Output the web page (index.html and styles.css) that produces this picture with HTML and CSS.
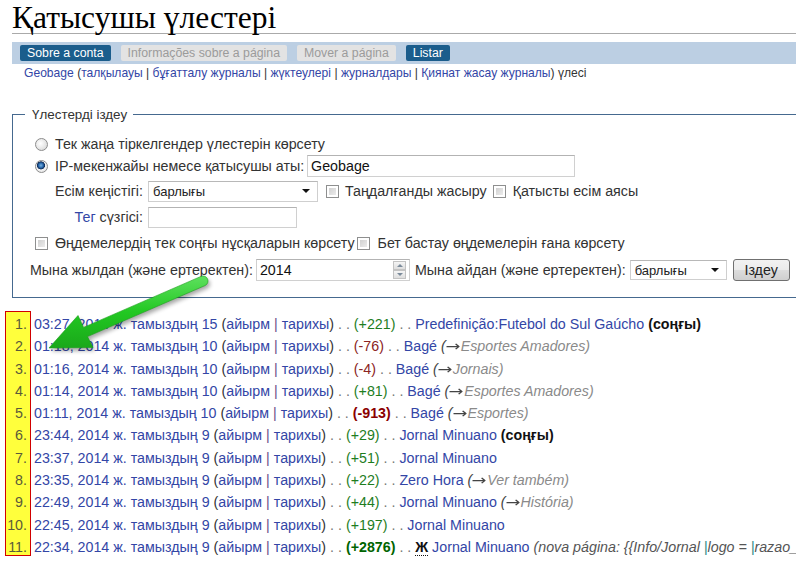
FILE: index.html
```html
<!DOCTYPE html>
<html lang="kk">
<head>
<meta charset="utf-8">
<title>Қатысушы үлестері</title>
<link rel="stylesheet" href="styles.css">
</head>
<body>
<div class="page">
  <h1 class="title">Қатысушы үлестері</h1>
  <nav class="tabs">
    <span class="tab tab-active">Sobre a conta</span>
    <span class="tab tab-disabled">Informações sobre a página</span>
    <span class="tab tab-disabled">Mover a página</span>
    <span class="tab tab-active">Listar</span>
  </nav>
  <div class="sub"><a class="lnk">Geobage</a> (<a class="lnk">талқылауы</a> | <a class="lnk">бұғатталу журналы</a> | <a class="lnk">жүктеулері</a> | <a class="lnk">журналдары</a> | <a class="lnk">Қиянат жасау журналы</a>) үлесі</div>

  <form class="search-form">
    <fieldset class="search">
      <legend class="legend">Үлестерді іздеу</legend>
      <div class="row row1">
        <input type="radio" name="t" class="radio">
        <label class="lbl">Тек жаңа тіркелгендер үлестерін көрсету</label>
      </div>
      <div class="row row2">
        <input type="radio" name="t" class="radio" checked>
        <label class="lbl">IP-мекенжайы немесе қатысушы аты:</label>
        <input type="text" class="text ip" value="Geobage">
      </div>
      <div class="row row3">
        <label class="col-label">Есім кеңістігі:</label>
        <span class="select-wrap ns"><select class="select"><option>барлығы</option></select></span>
        <input type="checkbox" class="check c1">
        <label class="lbl l1">Таңдалғанды жасыру</label>
        <input type="checkbox" class="check c2">
        <label class="lbl l2">Қатысты есім аясы</label>
      </div>
      <div class="row row4">
        <label class="col-label"><a class="lnk">Тег</a> сүзгісі:</label>
        <input type="text" class="text tag">
      </div>
      <div class="row row5">
        <input type="checkbox" class="check c3">
        <label class="lbl l3">Өңдемелердің тек соңғы нұсқаларын көрсету</label>
        <input type="checkbox" class="check c4">
        <label class="lbl l4">Бет бастау өңдемелерін ғана көрсету</label>
      </div>
      <div class="row row6">
        <label class="plain">Мына жылдан (және ертеректен):</label>
        <span class="num-wrap">
          <input type="text" class="num-input" value="2014">
          <span class="spin"><span class="spin-btn up"></span><span class="spin-btn down"></span></span>
        </span>
        <label class="plain month-label">Мына айдан (және ертеректен):</label>
        <span class="select-wrap month"><select class="select"><option>барлығы</option></select></span>
        <button type="button" class="btn">Іздеу</button>
      </div>
    </fieldset>
  </form>

  <ol class="contribs">
    <li><a class="lnk">03:27, 2014 ж. тамыздың 15</a> (<a class="lnk">айырм</a> <span class="sep">|</span> <a class="lnk">тарихы</a>) <span class="dots">. .</span> <span class="pos">(+221)</span> <span class="dots">. .</span> <a class="lnk">Predefinição:Futebol do Sul Gaúcho</a> <b class="cur">(соңғы)</b></li>
    <li><a class="lnk">01:18, 2014 ж. тамыздың 10</a> (<a class="lnk">айырм</a> <span class="sep">|</span> <a class="lnk">тарихы</a>) <span class="dots">. .</span> <span class="neg">(-76)</span> <span class="dots">. .</span> <a class="lnk">Bagé</a> <span class="cmt"><span class="cmt-d">(<span class="arr">→</span></span>Esportes Amadores)</span></li>
    <li><a class="lnk">01:16, 2014 ж. тамыздың 10</a> (<a class="lnk">айырм</a> <span class="sep">|</span> <a class="lnk">тарихы</a>) <span class="dots">. .</span> <span class="neg">(-4)</span> <span class="dots">. .</span> <a class="lnk">Bagé</a> <span class="cmt"><span class="cmt-d">(<span class="arr">→</span></span>Jornais)</span></li>
    <li><a class="lnk">01:14, 2014 ж. тамыздың 10</a> (<a class="lnk">айырм</a> <span class="sep">|</span> <a class="lnk">тарихы</a>) <span class="dots">. .</span> <span class="pos">(+81)</span> <span class="dots">. .</span> <a class="lnk">Bagé</a> <span class="cmt"><span class="cmt-d">(<span class="arr">→</span></span>Esportes Amadores)</span></li>
    <li><a class="lnk">01:11, 2014 ж. тамыздың 10</a> (<a class="lnk">айырм</a> <span class="sep">|</span> <a class="lnk">тарихы</a>) <span class="dots">. .</span> <strong class="neg strong">(-913)</strong> <span class="dots">. .</span> <a class="lnk">Bagé</a> <span class="cmt"><span class="cmt-d">(<span class="arr">→</span></span>Esportes)</span></li>
    <li><a class="lnk">23:44, 2014 ж. тамыздың 9</a> (<a class="lnk">айырм</a> <span class="sep">|</span> <a class="lnk">тарихы</a>) <span class="dots">. .</span> <span class="pos">(+29)</span> <span class="dots">. .</span> <a class="lnk">Jornal Minuano</a> <b class="cur">(соңғы)</b></li>
    <li><a class="lnk">23:37, 2014 ж. тамыздың 9</a> (<a class="lnk">айырм</a> <span class="sep">|</span> <a class="lnk">тарихы</a>) <span class="dots">. .</span> <span class="pos">(+51)</span> <span class="dots">. .</span> <a class="lnk">Jornal Minuano</a></li>
    <li><a class="lnk">23:35, 2014 ж. тамыздың 9</a> (<a class="lnk">айырм</a> <span class="sep">|</span> <a class="lnk">тарихы</a>) <span class="dots">. .</span> <span class="pos">(+22)</span> <span class="dots">. .</span> <a class="lnk">Zero Hora</a> <span class="cmt"><span class="cmt-d">(<span class="arr">→</span></span>Ver também)</span></li>
    <li><a class="lnk">22:49, 2014 ж. тамыздың 9</a> (<a class="lnk">айырм</a> <span class="sep">|</span> <a class="lnk">тарихы</a>) <span class="dots">. .</span> <span class="pos">(+44)</span> <span class="dots">. .</span> <a class="lnk">Jornal Minuano</a> <span class="cmt"><span class="cmt-d">(<span class="arr">→</span></span>História)</span></li>
    <li><a class="lnk">22:45, 2014 ж. тамыздың 9</a> (<a class="lnk">айырм</a> <span class="sep">|</span> <a class="lnk">тарихы</a>) <span class="dots">. .</span> <span class="pos">(+197)</span> <span class="dots">. .</span> <a class="lnk">Jornal Minuano</a></li>
    <li><a class="lnk">22:34, 2014 ж. тамыздың 9</a> (<a class="lnk">айырм</a> <span class="sep">|</span> <a class="lnk">тарихы</a>) <span class="dots">. .</span> <strong class="pos strong">(+2876)</strong> <span class="dots">. .</span> <abbr class="newpage">Ж</abbr> <a class="lnk">Jornal Minuano</a> <span class="cmt cmt-new">(nova página: {{Info/Jornal <span class="pipe">|</span>logo = <span class="pipe">|</span>razao_</span></li>
  </ol>
</div>

<svg class="arrow" width="796" height="563" viewBox="0 0 796 563" aria-hidden="true">
  <defs>
    <filter id="blur" x="-20%" y="-20%" width="140%" height="140%"><feGaussianBlur stdDeviation="2"/></filter>
    <linearGradient id="g" x1="0" y1="0" x2="0" y2="1">
      <stop offset="0" stop-color="#5ee05e"/>
      <stop offset="0.5" stop-color="#22c822"/>
      <stop offset="1" stop-color="#1aa81a"/>
    </linearGradient>
  </defs>
  <path d="M201,276.4 L83.5,327.4 L78,315.5 L49,348 L93,347.5 L87.5,336.6 L205,285.6 A5,5 0 0 0 201,276.4 Z" transform="translate(2,3)" fill="#000" opacity="0.35" filter="url(#blur)"/>
  <path d="M201,276.4 L83.5,327.4 L78,315.5 L49,348 L93,347.5 L87.5,336.6 L205,285.6 A5,5 0 0 0 201,276.4 Z" fill="url(#g)" stroke="#18a018" stroke-width="0.6"/>
</svg>
</body>
</html>
```
FILE: styles.css
```css
html {
  overflow: hidden;
}
body {
  margin: 0;
  width: 796px;
  height: 563px;
  overflow: hidden;
  position: relative;
  background: #fff;
  color: #222;
  font-family: "Liberation Sans", Arial, sans-serif;
  font-size: 14.25px;
}
.page {
  padding-left: 12px;
}
.title {
  margin: 0;
  padding: 0;
  font-family: "Liberation Serif", "Times New Roman", serif;
  font-weight: normal;
  font-size: 31.5px;
  line-height: 35px;
  height: 33px;
  overflow: visible;
  color: #000;
  border-bottom: 1px solid #aaa;
}
.tabs {
  margin-top: 8px;
  height: 22px;
  background: #bccfe3;
  display: flex;
  align-items: center;
  gap: 10px;
  padding-left: 8px;
}
.tab {
  height: 16px;
  line-height: 16px;
  padding: 0 7px;
  border-radius: 2px;
  font-size: 12.3px;
}
.tab-active {
  background: #1b5d8c;
  color: #fff;
}
.tab-disabled {
  background: #e3e3e3;
  color: #9b9b9b;
}
.sub {
  padding-left: 12px;
  font-size: 12.1px;
  line-height: 18px;
  color: #333;
}
.lnk {
  color: #3346a6;
  text-decoration: none;
}
.search-form {
  margin: 0;
}
.search {
  margin: 25px -40px 0 0;
  padding: 11px 0 16px 17px;
  border: 1px solid #45698f;
  min-width: 0;
}
.legend {
  margin-left: -5px;
  padding: 0 6px 0 7px;
  font-size: 13.4px;
  line-height: 15px;
  color: #333;
}
.row {
  display: flex;
  align-items: center;
  height: 22px;
  white-space: nowrap;
  color: #333;
}
.row3 { margin-top: 3px; }
.row4 { margin-top: 4px; }
.row5 { margin-top: 4px; }
.row6 { margin-top: 5px; }

.radio {
  appearance: none;
  -webkit-appearance: none;
  width: 13px;
  height: 13px;
  margin: 0 7px 0 5px;
  border: 1px solid #8c8c8c;
  border-radius: 50%;
  background: radial-gradient(circle at 40% 40%, #ffffff 0, #e4e4e4 60%, #cfcfcf 100%);
  box-sizing: border-box;
}
.radio:checked {
  background: radial-gradient(circle at 45% 40%, #7fb4e0 0, #2a6cb0 25%, #102a55 42%, #f4f4f4 48%, #dadada 100%);
}
.check {
  appearance: none;
  -webkit-appearance: none;
  width: 13px;
  height: 13px;
  margin: 0;
  border: 1px solid #8e8f8f;
  background: linear-gradient(135deg, #c9c9c9, #f3f3f3);
  box-shadow: inset 0 0 0 2px #fff;
  box-sizing: border-box;
}
.c1 { margin-left: 8px; }
.l1 { margin-left: 6px; }
.c2 { margin-left: 6px; }
.l2 { margin-left: 7px; }
.c3 { margin-left: 5px; }
.l3 { margin-left: 7px; }
.c4 { margin-left: 2px; }
.l4 { margin-left: 8px; }

.text {
  box-sizing: border-box;
  border: 1px solid #d0d0d0;
  border-top-color: #b3b3b3;
  font-family: "Liberation Sans", Arial, sans-serif;
  font-size: 14.25px;
  color: #111;
  padding: 0 3px;
  margin: 0;
  background: #fff;
  outline: none;
}
.ip {
  width: 268px;
  height: 22px;
  margin-left: 3px;
}
.tag {
  width: 149px;
  height: 21px;
}
.col-label {
  width: 113px;
  margin-right: 5px;
  text-align: right;
}
.select-wrap {
  position: relative;
  display: inline-block;
}
.select-wrap::after {
  content: "";
  position: absolute;
  right: 8px;
  top: 50%;
  margin-top: -2px;
  border-left: 4px solid transparent;
  border-right: 4px solid transparent;
  border-top: 4px solid #111;
  pointer-events: none;
}
.select {
  appearance: none;
  -webkit-appearance: none;
  box-sizing: border-box;
  width: 100%;
  height: 100%;
  border: 1px solid #cfcfcf;
  border-top-color: #b8b8b8;
  background: #fff;
  font-family: "Liberation Sans", Arial, sans-serif;
  font-size: 13px;
  color: #222;
  padding: 0 4px;
  margin: 0;
  outline: none;
}
.ns {
  width: 170px;
  height: 21px;
}
.month {
  width: 97px;
  height: 20px;
  margin-left: 4px;
}
.num-wrap {
  display: flex;
  box-sizing: border-box;
  width: 154px;
  height: 22px;
  margin-left: 3px;
  border: 1px solid #d0d0d0;
  border-top-color: #b3b3b3;
  background: #fff;
}
.num-input {
  flex: 1;
  min-width: 0;
  border: 0;
  padding: 0 3px;
  margin: 0;
  font-family: "Liberation Sans", Arial, sans-serif;
  font-size: 14.25px;
  color: #111;
  outline: none;
  background: transparent;
}
.spin {
  display: flex;
  flex-direction: column;
  width: 13px;
  margin: 1px 3px 1px 0;
}
.spin-btn {
  position: relative;
  flex: 1;
  border: 1px solid #c3c3c3;
  background: linear-gradient(#f5f5f5, #dedede);
}
.spin-btn::after {
  content: "";
  position: absolute;
  left: 3px;
  top: 2px;
  border-left: 3px solid transparent;
  border-right: 3px solid transparent;
}
.up::after { border-bottom: 3px solid #7a8a9a; }
.down::after { border-top: 3px solid #7a8a9a; }
.month-label {
  margin-left: 5px;
}
.btn {
  box-sizing: border-box;
  width: 57px;
  height: 22px;
  margin-left: 6px;
  border: 1px solid #707070;
  border-radius: 3px;
  background: linear-gradient(#f2f2f2 0%, #ebebeb 50%, #dddddd 51%, #cfcfcf 100%);
  font-family: "Liberation Sans", Arial, sans-serif;
  font-size: 14.25px;
  color: #222;
  padding: 0;
}

.contribs {
  position: relative;
  margin: 13px 0 0 -12px;
  padding: 2px 0 0 0;
  list-style: none;
  counter-reset: item;
  overflow: hidden;
}
.contribs::before {
  content: "";
  position: absolute;
  left: 5px;
  top: 0;
  width: 24px;
  height: 243px;
  background: #ffff3c;
  border: 1px solid #d00000;
}
.contribs li {
  position: relative;
  counter-increment: item;
  line-height: 22.3px;
  white-space: nowrap;
  color: #333;
}
.contribs li::before {
  content: counter(item) ".";
  display: inline-block;
  width: 27px;
  margin-right: 7px;
  text-align: right;
  color: #5a5a3a;
}
.sep { color: #6a4a8a; }
.dots { color: #777; }
.pos { color: #1e7d1e; }
.neg { color: #8b2323; }
.strong { font-weight: bold; }
.pos.strong { color: #006400; }
.neg.strong { color: #8b0000; }
.cur { color: #111; }
.cmt {
  font-style: italic;
  color: #8a8a8a;
}
.cmt-d { color: #444; }
.arr {
  display: inline-block;
  font-family: "DejaVu Sans", sans-serif;
  font-style: normal;
  transform: scaleX(1.25);
  margin: 0 2px 0 1px;
}
.cmt-new { color: #555; }
.pipe { color: #2a8a8a; }
.newpage {
  font-weight: bold;
  color: #111;
  text-decoration: none;
  border-bottom: 1px dotted #111;
}

.arrow {
  position: absolute;
  left: 0;
  top: 0;
  pointer-events: none;
}
```
